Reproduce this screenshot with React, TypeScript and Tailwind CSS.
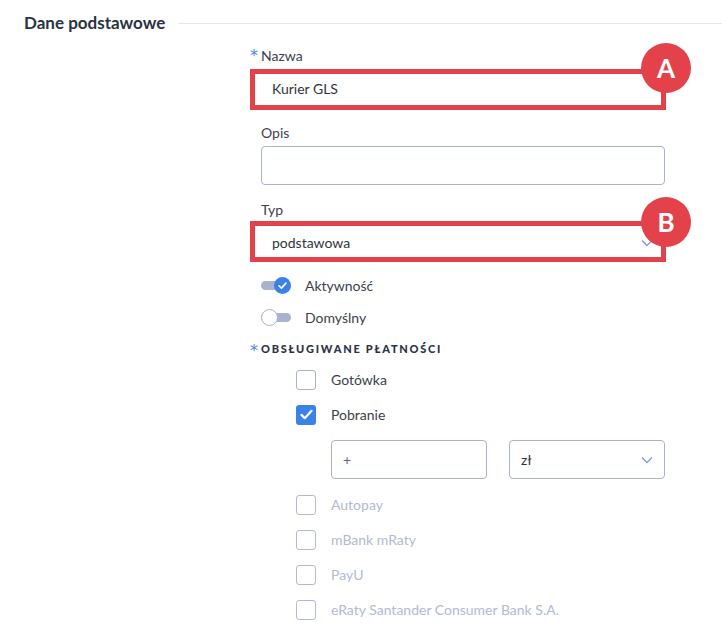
import { ReactNode } from 'react';

const font = { fontFamily: 'Lato, "Noto Sans", sans-serif' };

const Star = ({ className }: { className: string }) => (
  <span className={`absolute text-[16px] font-normal leading-none text-[#4f86e6] ${className}`} style={{ fontFamily: '"DejaVu Sans", sans-serif' }}>
    *
  </span>
);

const Badge = ({ letter }: { letter: string }) => (
  <span className="absolute -right-[26px] -top-[26px] flex h-[50px] w-[50px] items-center justify-center rounded-full bg-[#e3424b] text-[26px] font-bold leading-none text-white">
    {letter}
  </span>
);

const Label = ({ children, required }: { children: ReactNode; required?: boolean }) => (
  <div className="relative mb-[3px] h-5 text-[14px] leading-5 text-[#3a3f4b]">
    {required && <Star className="-left-[11px] top-[2px]" />}
    {children}
  </div>
);

const Chevron = ({ className }: { className?: string }) => (
  <svg viewBox="0 0 12 8" className={className} width="12" height="8" fill="none">
    <path d="M1 1.5l5 5 5-5" stroke="#7d9be0" strokeWidth="1.3" />
  </svg>
);

const Toggle = ({ on, label }: { on: boolean; label: string }) => (
  <div className="flex h-8 items-center">
    <div className="relative h-[17px] w-[30px]">
      <div className="absolute left-0 right-0 top-[4px] h-[9px] rounded-full bg-[#aab3cd]" />
      {on ? (
        <div className="absolute right-0 top-0 flex h-[17px] w-[17px] items-center justify-center rounded-full bg-[#3b82e8]">
          <svg viewBox="0 0 12 12" width="11" height="11" fill="none">
            <path d="M2.2 6.3l2.6 2.5 5-5.4" stroke="white" strokeWidth="1.8" strokeLinecap="round" strokeLinejoin="round" />
          </svg>
        </div>
      ) : (
        <div className="absolute left-0 top-0 h-[17px] w-[17px] rounded-full border border-[#aab3cd] bg-white" />
      )}
    </div>
    <span className="ml-[14px] text-[14px] text-[#3a3f4b]">{label}</span>
  </div>
);

const Check = ({ label, checked, disabled }: { label: string; checked?: boolean; disabled?: boolean }) => (
  <div className="flex h-[35px] items-center pl-[35px]">
    {checked ? (
      <div className="flex h-5 w-5 items-center justify-center rounded-[3px] bg-[#3b82e8]">
        <svg viewBox="0 0 14 14" width="15" height="15" fill="none">
          <path d="M2.3 7.4l3.1 3 6.3-6.8" stroke="white" strokeWidth="2.1" strokeLinecap="round" strokeLinejoin="round" />
        </svg>
      </div>
    ) : (
      <div className={`h-5 w-5 rounded-[3px] border ${disabled ? 'border-[#b3bbd4]' : 'border-[#a9b2cc]'} bg-white`} />
    )}
    <span className={`ml-[15px] text-[14px] ${disabled ? 'text-[#b3bad3]' : 'text-[#3a3f4b]'}`}>{label}</span>
  </div>
);

export default function App() {
  return (
    <div className="h-[627px] w-[722px] overflow-hidden bg-white" style={font}>
      <div className="flex items-center pl-6 pt-[12px]">
        <h2 className="text-[17px] font-bold leading-[22px] text-[#2a3342]">Dane podstawowe</h2>
        <div className="ml-[13px] h-px flex-1 bg-[#e6e7ea]" />
      </div>

      <div className="ml-[261px] w-[404px]">
        <div className="mt-[12px]">
          <Label required>Nazwa</Label>
          <div className="relative h-[39px]">
            <div className="flex h-full items-center rounded px-[11px] text-[14px] text-[#2f3440]">Kurier GLS</div>
            <div className="absolute -bottom-[2px] -left-[11px] -right-[1px] top-0 border-[5px] border-[#e3424b]" />
            <Badge letter="A" />
          </div>
        </div>

        <div className="mt-[15px]">
          <Label>Opis</Label>
          <div className="h-[39px] rounded border border-[#aab3cd]" />
        </div>

        <div className="mt-[15px]">
          <Label>Typ</Label>
          <div className="relative h-[39px]">
            <div className="flex h-full items-center justify-between rounded px-[11px] text-[14px] text-[#2f3440]">
              podstawowa
              <Chevron className="mr-[1px]" />
            </div>
            <div className="absolute -left-[11px] -right-[1px] -top-[2px] bottom-0 border-[5px] border-[#e3424b]" />
            <Badge letter="B" />
          </div>
        </div>

        <div className="mt-[7px]">
          <Toggle on label="Aktywność" />
          <Toggle on={false} label="Domyślny" />
        </div>

        <div className="relative mt-[2px] flex h-[28px] items-center text-[11px] font-black uppercase tracking-[0.16em] text-[#2a3342]">
          <Star className="-left-[11px] top-[8px]" />
          Obsługiwane płatności
        </div>

        <div className="-mt-[1px]">
          <Check label="Gotówka" />
          <Check label="Pobranie" checked />
          <div className="mb-[8px] ml-[70px] mt-[8px] flex gap-[22px]">
            <div className="flex h-[39px] w-[156px] items-center rounded border border-[#aab3cd] px-[11px] text-[14px] text-[#6b5d7a]">
              +
            </div>
            <div className="flex h-[39px] w-[156px] items-center justify-between rounded border border-[#aab3cd] px-[11px] text-[14px] text-[#2f3440]">
              zł
              <Chevron />
            </div>
          </div>
          <Check label="Autopay" disabled />
          <Check label="mBank mRaty" disabled />
          <Check label="PayU" disabled />
          <Check label="eRaty Santander Consumer Bank S.A." disabled />
        </div>
      </div>
    </div>
  );
}
